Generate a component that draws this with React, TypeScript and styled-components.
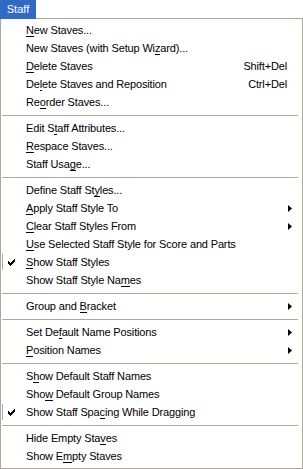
import React from 'react';
import styled, { createGlobalStyle } from 'styled-components';

// --- Global ---

const GlobalStyle = createGlobalStyle`
  html, body {
    margin: 0;
    padding: 0;
    background: #ffffff;
  }
  body {
    font-family: 'Liberation Sans', Arial, sans-serif;
    font-size: 11px;
    color: #000;
  }
`;

// --- Styled Components ---

const Screen = styled.div`
  width: 303px;
  height: 469px;
  display: flex;
  flex-direction: column;
  background: #ffffff;
`;

const MenuBar = styled.div`
  display: flex;
  height: 19px;
`;

const MenuTitle = styled.div`
  width: 36px;
  height: 19px;
  background: #316ac5;
  color: #ffffff;
  display: flex;
  align-items: center;
  justify-content: center;
  font-size: 11px;
  padding-bottom: 1px;
  box-sizing: border-box;
`;

const TitleGap = styled.div`
  flex: 1;
  border-bottom: 1px solid #aca899;
  border-right: 1px solid #aca899;
  box-sizing: border-box;
  margin-top: 18px;
`;

const Panel = styled.div`
  flex: 1;
  display: flex;
  flex-direction: column;
  border-left: 1px solid #aca899;
  border-right: 1px solid #aca899;
  border-bottom: 1px solid #aca899;
  padding: 2px 1px;
  box-sizing: border-box;
`;

const Row = styled.div`
  height: 18px;
  display: grid;
  grid-template-columns: 23px 1fr auto 14px;
  align-items: center;
  white-space: nowrap;
  letter-spacing: -0.15px;
`;

const CheckCell = styled.div<{ $checked?: boolean }>`
  width: 17px;
  height: 16px;
  margin-left: 0;
  display: flex;
  align-items: center;
  justify-content: center;
  border-left: 1px solid ${(p) => (p.$checked ? '#aca899' : 'transparent')};
  box-sizing: border-box;
`;

const Label = styled.span`
  padding-left: 1px;
  u {
    text-decoration: none;
    border-bottom: 1px solid #000;
    display: inline-block;
    line-height: 11px;
  }
`;

const Shortcut = styled.span`
  text-align: right;
`;

const ArrowCell = styled.div`
  display: flex;
  align-items: center;
  padding-left: 1px;
`;

const Separator = styled.div`
  height: 8px;
  display: flex;
  align-items: center;
  padding-right: 3px;
  &::after {
    content: '';
    flex: 1;
    height: 1px;
    background: #aca899;
  }
`;

// --- Data ---

type Entry =
  | { sep: true }
  | { label: string; key?: string; sub?: boolean; checked?: boolean };

const entries: Entry[] = [
  { label: '&New Staves...' },
  { label: 'New Staves (with Setup Wi&zard)...' },
  { label: '&Delete Staves', key: 'Shift+Del' },
  { label: 'De&lete Staves and Reposition', key: 'Ctrl+Del' },
  { label: 'Re&order Staves...' },
  { sep: true },
  { label: 'Edit S&taff Attributes...' },
  { label: '&Respace Staves...' },
  { label: 'Staff Usa&ge...' },
  { sep: true },
  { label: 'Define Staff St&yles...' },
  { label: '&Apply Staff Style To', sub: true },
  { label: '&Clear Staff Styles From', sub: true },
  { label: '&Use Selected Staff Style for Score and Parts' },
  { label: '&Show Staff Styles', checked: true },
  { label: 'Show Staff Style Na&mes' },
  { sep: true },
  { label: 'Group and &Bracket', sub: true },
  { sep: true },
  { label: 'Set De&fault Name Positions', sub: true },
  { label: '&Position Names', sub: true },
  { sep: true },
  { label: 'S&how Default Staff Names' },
  { label: 'Sho&w Default Group Names' },
  { label: 'Show Staff Spa&cing While Dragging', checked: true },
  { sep: true },
  { label: 'Hide Empty Sta&ves' },
  { label: 'Show E&mpty Staves' },
];

// '&' marks the access-key letter
function Mnemonic({ text }: { text: string }) {
  const i = text.indexOf('&');
  if (i < 0) return <>{text}</>;
  return (
    <>
      {text.slice(0, i)}
      <u>{text[i + 1]}</u>
      {text.slice(i + 2)}
    </>
  );
}

const Check = () => (
  <svg width="7" height="7" viewBox="0 0 7 7">
    <path d="M0 2h1v1h1v1h1V3h1V2h1V1h1V0h1v3H6v1H5v1H4v1H3v1H2V6H1V5H0z" fill="#000" />
  </svg>
);

const Arrow = () => (
  <svg width="4" height="7" viewBox="0 0 4 7">
    <path d="M0 0L4 3.5L0 7Z" fill="#000" />
  </svg>
);

export default function App() {
  return (
    <>
      <GlobalStyle />
      <Screen>
        <MenuBar>
          <MenuTitle>Staff</MenuTitle>
          <TitleGap />
        </MenuBar>
        <Panel>
          {entries.map((e, idx) =>
            'sep' in e ? (
              <Separator key={idx} />
            ) : (
              <Row key={idx}>
                <CheckCell $checked={e.checked}>{e.checked && <Check />}</CheckCell>
                <Label>
                  <Mnemonic text={e.label} />
                </Label>
                <Shortcut>{e.key}</Shortcut>
                <ArrowCell>{e.sub && <Arrow />}</ArrowCell>
              </Row>
            )
          )}
        </Panel>
      </Screen>
    </>
  );
}
